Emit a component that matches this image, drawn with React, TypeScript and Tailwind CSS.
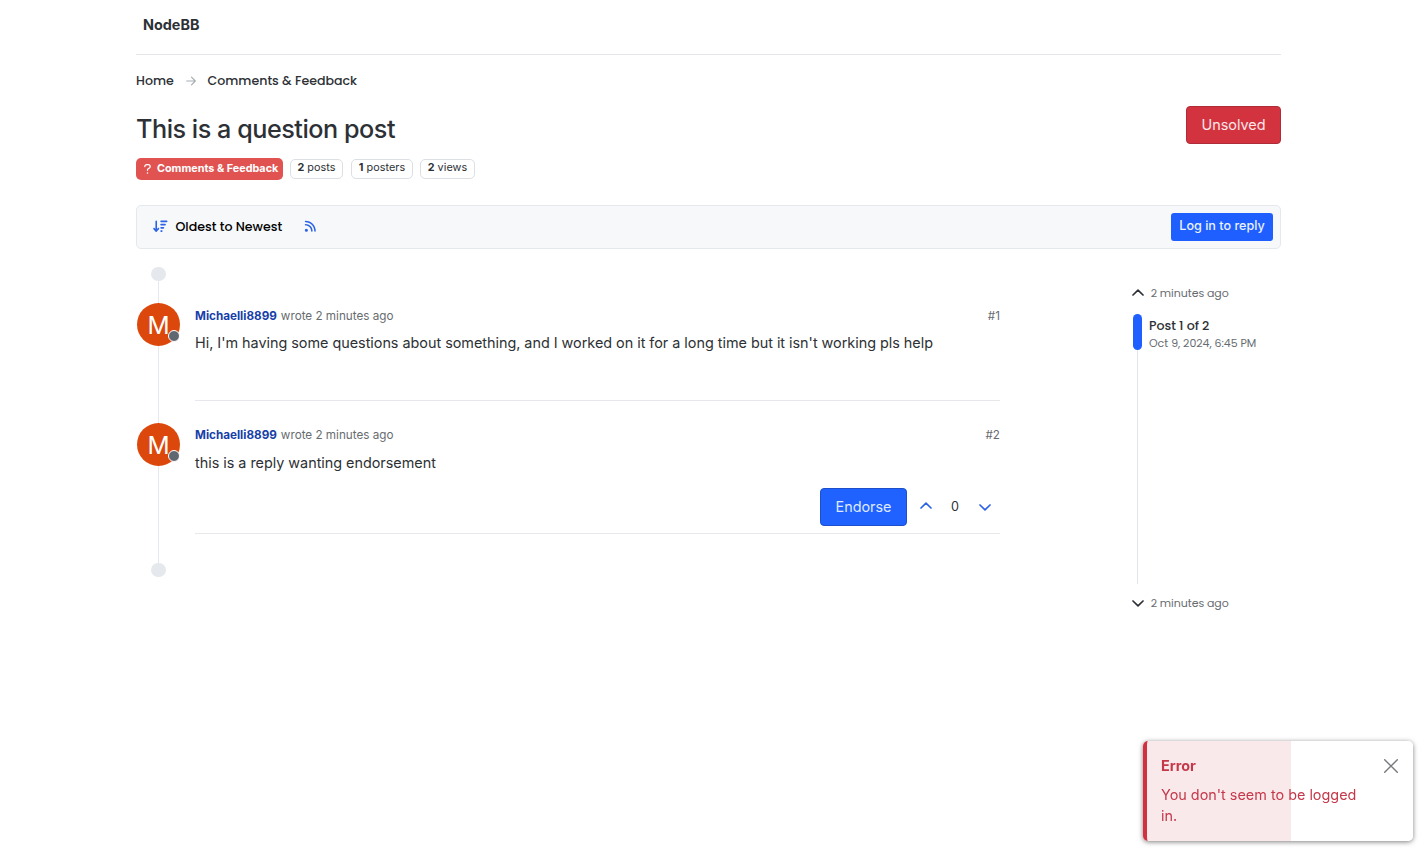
import type { ReactNode } from "react";
import { FaArrowDownWideShort, FaRss } from "react-icons/fa6";

function Chevron({ up = false, className = "" }: { up?: boolean; className?: string }) {
  return (
    <svg viewBox="0 0 12 8" className={`h-2 w-3 shrink-0 ${className}`} fill="none" stroke="currentColor" strokeWidth="1.7" strokeLinecap="round" strokeLinejoin="round">
      <path d={up ? "M1 6 6 1.2l5 4.8" : "M1 2l5 4.8L11 2"} />
    </svg>
  );
}

function Stat({ value, label, className }: { value: number; label: string; className: string }) {
  return (
    <span className={`flex h-5 items-center justify-center rounded-[5px] border border-[#dcdfe3] pb-[2px] text-[10.8px] tracking-[0.08px] whitespace-nowrap ${className}`}>
      <b className="mr-[3px] font-bold">{value}</b>
      {label}
    </span>
  );
}

function Post({ index, text, className, bodyClassName, headClassName, children }: { index: number; text: string; className: string; bodyClassName: string; headClassName: string; children?: ReactNode }) {
  return (
    <article className={`flex ${className}`}>
      <div className="flex w-[45px] shrink-0 flex-col items-center">
        <div className="relative flex size-[43px] shrink-0 items-center justify-center rounded-full bg-[#dc480c] pt-px text-[24.5px] text-white">
          M
          <span className="absolute right-0 bottom-[4.5px] size-[12px] rounded-full border border-white bg-[#5f6770]" />
        </div>
        <div className="w-px flex-1 bg-[#e5e8ec]" />
      </div>
      <div className={`ml-[14px] flex w-[805px] flex-col border-b border-[#e6e8eb] ${bodyClassName}`}>
        <div className={`flex h-[26px] items-center justify-between text-[11.7px] text-[#686c70] ${headClassName}`}>
          <span className="whitespace-nowrap">
            <b className="font-bold text-[#173fa8]">Michaelli8899</b>
            <span className="ml-1">wrote 2 minutes ago</span>
          </span>
          <span>#{index}</span>
        </div>
        <p className="h-[28px] text-[14.4px] leading-[28px] tracking-[-0.02px] whitespace-nowrap">{text}</p>
        {children}
      </div>
    </article>
  );
}

export default function App() {
  return (
    <div className="h-[862px] overflow-hidden bg-white pl-[136px] font-['Inter',sans-serif] text-[#2d3135]">
      <div className="w-[1145px]">
        <header className="flex h-[55px] border-b border-[#e4e6e9] pt-[14px] pl-[7px]">
          <span className="text-[14.4px] leading-[22px] font-bold">NodeBB</span>
        </header>

        <nav className="flex h-[51px] items-center text-[12.6px] leading-[20px] font-medium font-['Poppins','Inter',sans-serif]">
          <span className="w-[38px] pt-px whitespace-nowrap">Home</span>
          <svg viewBox="0 0 10 10" className="mr-[12.5px] ml-[11.5px] size-[10px]" fill="none" stroke="#a8adb2" strokeWidth="1.2" strokeLinecap="round" strokeLinejoin="round">
            <path d="M.7 5h8.6M5.5 1.2 9.3 5 5.5 8.8" />
          </svg>
          <span className="-ml-[0.5px] pt-px whitespace-nowrap">Comments &amp; Feedback</span>
        </nav>

        <div className="flex h-[99px] justify-between">
          <div>
            <h1 className="mt-[5px] h-[36px] text-[25.2px] leading-[36px] font-[450] tracking-[-0.47px] whitespace-nowrap">This is a question post</h1>
            <div className="mt-[11px] flex items-center">
              <span className="flex h-[22px] w-[147px] items-center rounded-[5px] bg-[#e15350] pl-[8px] text-[10.8px] font-bold whitespace-nowrap text-white">
                <svg viewBox="0 0 7 10" className="mr-[6px] mb-px h-[10px] w-[7px]" fill="none" stroke="currentColor" strokeWidth="1.25" strokeLinecap="round" strokeLinejoin="round">
                  <path d="M.8 2.5C.8 1.3 1.7.7 2.8.7h1.3c1.2 0 2.1.8 2.1 1.9 0 .8-.4 1.3-1.1 1.7l-.9.5c-.5.3-.7.6-.7 1.2v.3" />
                  <circle cx="3.5" cy="9" r=".8" fill="currentColor" stroke="none" />
                </svg>
                Comments &amp; Feedback
              </span>
              <Stat value={2} label="posts" className="ml-[7px] w-[53px]" />
              <Stat value={1} label="posters" className="ml-[8px] w-[62px]" />
              <Stat value={2} label="views" className="ml-[7px] w-[55px]" />
            </div>
          </div>
          <button className="h-[38px] w-[95px] rounded-[4px] border border-[#ae2c38] bg-[#d3333f] text-[14.4px] text-[#fbe7e9]">Unsolved</button>
        </div>

        <div className="flex h-[44px] items-center rounded-[5px] border border-[#e5e8ec] bg-[#f6f8fa] pr-[7px] pl-[16px]">
          <FaArrowDownWideShort className="mb-px size-[14.5px] text-[#2c62e6]" />
          <span className="ml-[8px] w-[106px] text-[12.6px] font-medium whitespace-nowrap text-black font-['Poppins','Inter',sans-serif]">Oldest to Newest</span>
          <FaRss className="mb-px ml-[22.5px] size-[12.6px] text-[#2c62e6]" />
          <button className="ml-auto h-[28px] w-[102px] rounded-[3px] bg-[#1f5fff] pb-[2px] text-[12.6px] whitespace-nowrap text-[#eaf1ff] font-[450]">Log in to reply</button>
        </div>

        <div className="flex justify-between">
          <main className="pt-[18px]">
            <div className="flex h-[36px] w-[45px] flex-col items-center">
              <span className="size-[14.4px] shrink-0 rounded-full bg-[#e5e8ec]" />
              <span className="w-px flex-1 bg-[#e5e8ec]" />
            </div>
            <Post index={1} className="h-[120px]" bodyClassName="h-[98px]" headClassName="pt-[2px]" text="Hi, I'm having some questions about something, and I worked on it for a long time but it isn't working pls help" />
            <Post index={2} className="h-[140px]" bodyClassName="h-[111px]" headClassName="" text="this is a reply wanting endorsement">
              <div className="mt-[11px] ml-auto flex h-[38px] items-center">
                <button className="h-[38px] w-[87px] rounded-[4px] border border-[#1c4fc9] bg-[#1f62ff] text-[14.4px] text-[#dfe9ff]">Endorse</button>
                <Chevron up className="mb-[2px] ml-[12.5px] text-[#2c62e6]" />
                <span className="w-[47px] pt-px text-center text-[12.6px]">0</span>
                <Chevron className="mr-[9.5px] text-[#2c62e6]" />
              </div>
            </Post>
            <div className="-mt-[0.5px] flex w-[45px] justify-center">
              <span className="size-[14.4px] rounded-full bg-[#e5e8ec]" />
            </div>
          </main>

          <aside className="w-[150px] pt-[33px] font-['Poppins','Inter',sans-serif] text-[#686c70]">
            <div className="flex h-[22px] items-center gap-[7px] text-[11px] tracking-[-0.06px] whitespace-nowrap">
              <Chevron up className="ml-[0.7px] text-[#2d3135]" />
              <span>2 minutes ago</span>
            </div>
            <div className="mt-[10px] flex h-[270px]">
              <div className="ml-[2px] flex w-[9px] flex-col items-center">
                <span className="h-[36px] w-[9px] rounded-full bg-[#1f5fff]" />
                <span className="w-px flex-1 bg-[#e1e4e8]" />
              </div>
              <div className="ml-[7px] pt-[2px] whitespace-nowrap">
                <p className="text-[12.6px] leading-[19px] font-medium tracking-[-0.03px] text-[#2d3135]">Post 1 of 2</p>
                <p className="text-[11px] leading-[16px] tracking-[-0.03px]">Oct 9, 2024, 6:45 PM</p>
              </div>
            </div>
            <div className="mt-[8px] flex h-[22px] items-center gap-[7px] text-[11px] tracking-[-0.06px] whitespace-nowrap">
              <Chevron className="ml-[0.7px] text-[#2d3135]" />
              <span>2 minutes ago</span>
            </div>
          </aside>
        </div>
      </div>

      <div className="fixed top-[741px] left-[1143px] flex h-[100px] w-[270px] justify-between rounded-[5px] border-l-4 border-[#d0303f] bg-[linear-gradient(to_right,#fae9eb_144px,#fff_144px)] shadow-[0_1px_5px_rgba(0,0,0,0.5)]">
        <div className="w-[216px] pt-[14px] pl-[14px] text-[14.4px] text-[#c5384a]">
          <strong className="block leading-[22px] font-bold">Error</strong>
          <p className="mt-[7px] leading-[21px]">You don't seem to be logged in.</p>
        </div>
        <svg viewBox="0 0 14 14" className="mt-[18px] mr-[15px] size-[14px]" fill="none" stroke="#77797c" strokeWidth="1.4" strokeLinecap="round">
          <path d="m.7.7 12.6 12.6M13.3.7.7 13.3" />
        </svg>
      </div>
    </div>
  );
}
